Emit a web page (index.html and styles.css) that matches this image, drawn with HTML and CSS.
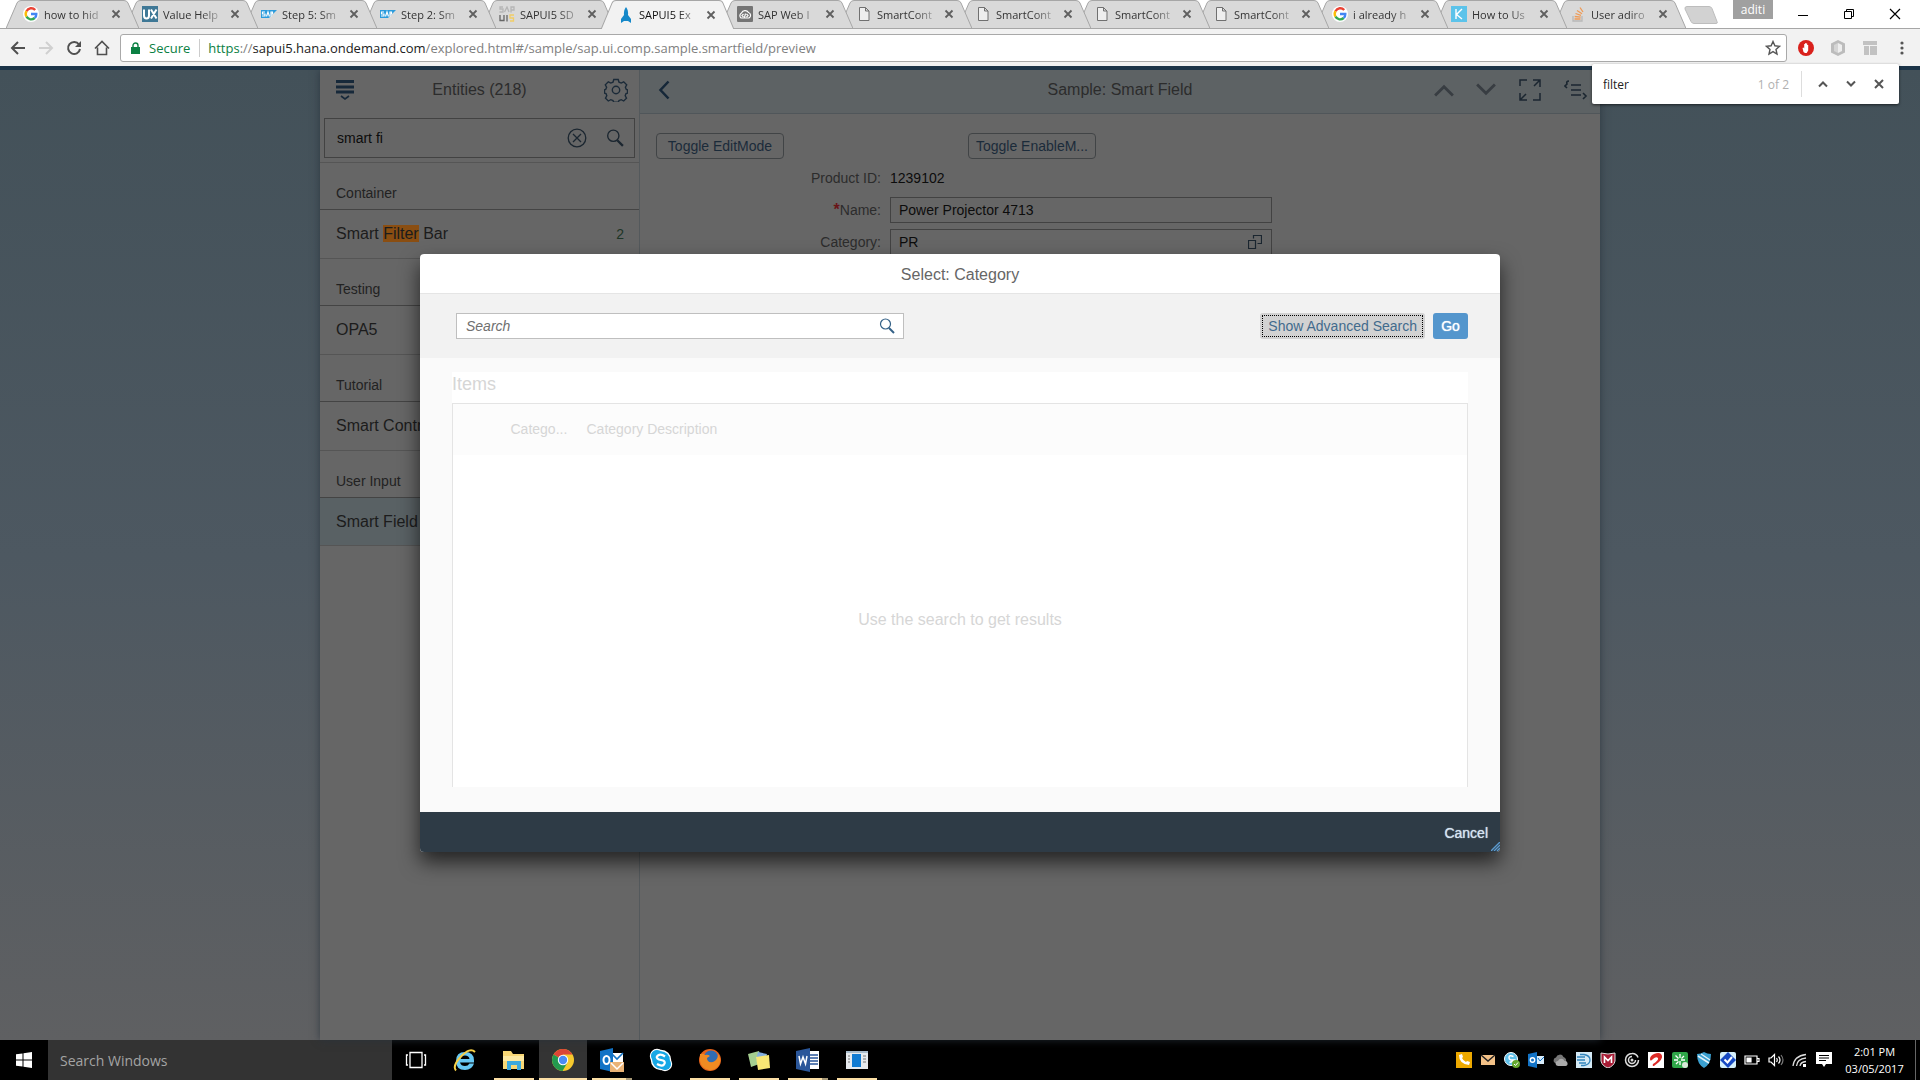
FILE: index.html
```html
<!DOCTYPE html>
<html lang="en">
<head>
<meta charset="utf-8">
<title>SAPUI5 Explored</title>
<link rel="stylesheet" href="styles.css">
</head>
<body>
<svg class="defs" aria-hidden="true">
  <symbol id="shape" viewBox="0 0 133 28" preserveAspectRatio="none"><path d="M0 28.500L11 3Q12 .5 15 .5H118Q121 .5 122 3L133 28.500"/></symbol>
  <symbol id="x" viewBox="0 0 10 10"><path d="M1.500 1.500l7 7M8.500 1.500l-7 7" fill="none" stroke="#5f5f5f" stroke-width="1.800"/></symbol>
  <symbol id="google" viewBox="0 0 16 16"><circle cx="8" cy="8" r="8" fill="#fff"/><g fill="none" stroke-width="2.400"><path d="M12.200 4A5.300 5.300 0 0 0 3.500 5.200" stroke="#ea4335"/><path d="M3.500 5.200a5.300 5.300 0 0 0 0 5.500" stroke="#fbbc05"/><path d="M3.500 10.700a5.300 5.300 0 0 0 8.200 1.300" stroke="#34a853"/><path d="M11.700 12A5.200 5.200 0 0 0 13.300 8H8" stroke="#4285f4"/></g></symbol>
  <symbol id="ux" viewBox="0 0 16 16"><path d="M0 0h16v16H0z" fill="#3f7896"/><path d="M2 3.500v6q0 3 2.500 3t2.500-3v-6M9 3.500l5.500 9M14.500 3.500l-5.500 9" fill="none" stroke="#fff" stroke-width="2"/></symbol>
  <symbol id="sap" viewBox="0 0 16 16"><path d="M0 4h16l-8 8H0z" fill="#2a9bdc"/><path d="M4 6H1.500v2H4v2H1M5.500 10.500L7 6l1.500 4.500M10 10.500V6h1.500v2H10" fill="none" stroke="#fff" stroke-width="1.200"/></symbol>
  <symbol id="sapui" viewBox="0 0 16 16"><g fill="none" stroke-width="1.300"><path d="M4 1H1v2h3v3H.5M5.500 6L8 1l2 5M12 6.500V1h3v3h-3" stroke="#b5b5b5"/><path d="M1 9v5.500h4V9M8 9v6.500" stroke="#666"/><path d="M15 9h-4v3h3.500v3H11" stroke="#f1cd66"/></g></symbol>
  <symbol id="rocket" viewBox="0 0 16 16"><path d="M8 0q2.500 3 2 8l3 4v4l-3-2H6l-3 2v-4l3-4Q5.500 3 8 0z" fill="#1588c9"/></symbol>
  <symbol id="webide" viewBox="0 0 16 16"><rect width="16" height="16" rx="1" fill="#747474"/><path d="M4 12a3 3 0 0 1 .5-5 4 4 0 0 1 7-.5A3 3 0 0 1 12 12zM6.500 8L5 9.500 6.500 11M9.500 8L11 9.500 9.500 11M8.500 7.500l-1 4" fill="none" stroke="#fff" stroke-width="1.200"/></symbol>
  <symbol id="doc" viewBox="0 0 16 16"><path d="M3.500 1.500h6l3.500 3.500v9.500H3.500zM9.500 1.500V5H13" fill="#eee" stroke="#707070"/></symbol>
  <symbol id="kk" viewBox="0 0 16 16"><path d="M0 0h16v16H0z" fill="#5cc3ea"/><path d="M5 3v10M11 3L5.500 8.500 11 13" fill="none" stroke="#fff" stroke-width="1.400"/></symbol>
  <symbol id="so" viewBox="0 0 16 16"><path d="M3 10v5h9v-5" fill="none" stroke="#b8b8b8" stroke-width="1.300"/><path d="M4.500 13h6M4.700 10.500l6 .7M5.500 7.500l5.500 1.800M7 4.500l5 3.200M10 1.500l3 4.500" stroke="#ef9a55" stroke-width="1.300"/></symbol>
  <symbol id="glass" viewBox="0 0 16 16"><circle cx="6.500" cy="6" r="5" fill="none" stroke="currentColor" stroke-width="1.200"/><path d="M10 10l5 5" stroke="currentColor" stroke-width="2"/></symbol>
  <symbol id="up" viewBox="0 0 18 12"><path d="M1 11l8-8 8 8" fill="none" stroke="currentColor" stroke-width="2.500"/></symbol>
</svg>

<header class="browser">
  <div class="tabstrip">
    <ul class="tabs">
      <li style="z-index:14"><svg class="shape"><use href="#shape"/></svg><svg class="fav"><use href="#google"/></svg><span>how to hid</span><button aria-label="Close tab"><svg><use href="#x"/></svg></button></li>
      <li style="z-index:13"><svg class="shape"><use href="#shape"/></svg><svg class="fav"><use href="#ux"/></svg><span>Value Help</span><button aria-label="Close tab"><svg><use href="#x"/></svg></button></li>
      <li style="z-index:12"><svg class="shape"><use href="#shape"/></svg><svg class="fav"><use href="#sap"/></svg><span>Step 5: Sm</span><button aria-label="Close tab"><svg><use href="#x"/></svg></button></li>
      <li style="z-index:11"><svg class="shape"><use href="#shape"/></svg><svg class="fav"><use href="#sap"/></svg><span>Step 2: Sm</span><button aria-label="Close tab"><svg><use href="#x"/></svg></button></li>
      <li style="z-index:10"><svg class="shape"><use href="#shape"/></svg><svg class="fav"><use href="#sapui"/></svg><span>SAPUI5 SD</span><button aria-label="Close tab"><svg><use href="#x"/></svg></button></li>
      <li class="active" style="z-index:15"><svg class="shape"><use href="#shape"/></svg><svg class="fav"><use href="#rocket"/></svg><span>SAPUI5 Ex</span><button aria-label="Close tab"><svg><use href="#x"/></svg></button></li>
      <li style="z-index:9"><svg class="shape"><use href="#shape"/></svg><svg class="fav"><use href="#webide"/></svg><span>SAP Web I</span><button aria-label="Close tab"><svg><use href="#x"/></svg></button></li>
      <li style="z-index:8"><svg class="shape"><use href="#shape"/></svg><svg class="fav"><use href="#doc"/></svg><span>SmartCont</span><button aria-label="Close tab"><svg><use href="#x"/></svg></button></li>
      <li style="z-index:7"><svg class="shape"><use href="#shape"/></svg><svg class="fav"><use href="#doc"/></svg><span>SmartCont</span><button aria-label="Close tab"><svg><use href="#x"/></svg></button></li>
      <li style="z-index:6"><svg class="shape"><use href="#shape"/></svg><svg class="fav"><use href="#doc"/></svg><span>SmartCont</span><button aria-label="Close tab"><svg><use href="#x"/></svg></button></li>
      <li style="z-index:5"><svg class="shape"><use href="#shape"/></svg><svg class="fav"><use href="#doc"/></svg><span>SmartCont</span><button aria-label="Close tab"><svg><use href="#x"/></svg></button></li>
      <li style="z-index:4"><svg class="shape"><use href="#shape"/></svg><svg class="fav"><use href="#google"/></svg><span>i already h</span><button aria-label="Close tab"><svg><use href="#x"/></svg></button></li>
      <li style="z-index:3"><svg class="shape"><use href="#shape"/></svg><svg class="fav"><use href="#kk"/></svg><span>How to Us</span><button aria-label="Close tab"><svg><use href="#x"/></svg></button></li>
      <li style="z-index:2"><svg class="shape"><use href="#shape"/></svg><svg class="fav"><use href="#so"/></svg><span>User adiro</span><button aria-label="Close tab"><svg><use href="#x"/></svg></button></li>
    </ul>
    <button class="newtab" aria-label="New tab"><svg width="34" height="18"><path d="M3 .5h22q2 0 3 2l5 13q1 2-1 2H10q-2 0-3-2L1 3Q.5 .5 3 .5z" fill="#d2d2d2" stroke="#bdbdbd"/></svg></button>
    <div class="window">
      <button class="user">aditi</button>
      <button class="ctl" aria-label="Minimize"><svg width="12" height="12"><path d="M1 7.500h10" stroke="#000"/></svg></button>
      <button class="ctl" aria-label="Restore"><svg width="12" height="12" fill="none" stroke="#000"><path d="M1.500 3.500h7v7h-7zM3.500 3V1.500h7v7H9"/></svg></button>
      <button class="ctl" aria-label="Close"><svg width="12" height="12" fill="none" stroke="#000"><path d="M1 1l10 10M11 1L1 11" stroke-width="1.200"/></svg></button>
    </div>
  </div>
  <div class="toolbar">
    <button class="nav" aria-label="Back"><svg width="16" height="16"><path d="M15 8H2M8 2L2 8l6 6" fill="none" stroke="#505050" stroke-width="2"/></svg></button>
    <button class="nav" aria-label="Forward"><svg width="16" height="16"><path d="M1 8h13M8 2l6 6-6 6" fill="none" stroke="#d0d0d0" stroke-width="2"/></svg></button>
    <button class="nav" aria-label="Reload"><svg width="16" height="16"><path d="M13 4.500A6 6 0 1 0 14 9" fill="none" stroke="#505050" stroke-width="2"/><path d="M15 1v6H9z" fill="#505050"/></svg></button>
    <button class="nav" aria-label="Home"><svg width="16" height="16"><path d="M1 8.500L8 1.500l7 7M3.500 7.500V14.500h9V7.500" fill="none" stroke="#505050" stroke-width="1.600"/></svg></button>
    <div class="omnibox">
      <svg width="9" height="12"><path d="M0 5h9v7H0z" fill="#0b8043"/><path d="M2 5V3.500a2.500 2.500 0 0 1 5 0V5" fill="none" stroke="#0b8043" stroke-width="1.400"/></svg>
      <span class="secure">Secure</span>
      <span class="url"><b>https</b>://<i>sapui5.hana.ondemand.com</i>/explored.html#/sample/sap.ui.comp.sample.smartfield/preview</span>
      <button aria-label="Bookmark"><svg width="16" height="16"><path d="M8 1.500l1.900 4.300 4.600.5-3.500 3.100 1 4.600L8 11.600 4 14l1-4.600L1.500 6.300l4.600-.5z" fill="none" stroke="#555" stroke-width="1.400"/></svg></button>
    </div>
    <div class="ext">
      <svg width="16" height="16"><ellipse cx="8" cy="8" rx="8" ry="8" fill="#d9211c"/><path d="M5.500 12L4.500 8l1-.5.700 1V4h1v3.500V3h1v4.500V3.500h1V8V5h1v5.500l-1.500 2.500H7z" fill="#fff"/></svg>
      <svg width="16" height="16"><path d="M8 0l7 3.500v9L8 16l-7-3.500v-9z" fill="#bcbcbc"/><path d="M8 3l4 2v6l-4 2z" fill="#eee"/><path d="M8 3L4 5v6l4 2z" fill="#d5d5d5"/></svg>
      <svg width="16" height="16"><path d="M1 1h14v4H1zM2 6h5v9H2zM8 6h7v9H8z" fill="#c2c2c2"/></svg>
      <button aria-label="Menu"><svg width="16" height="16" fill="#555"><circle cx="8" cy="3" r="1.600"/><circle cx="8" cy="8" r="1.600"/><circle cx="8" cy="13" r="1.600"/></svg></button>
    </div>
  </div>
  <form class="find">
    <input aria-label="Find in page" value="filter"><span>1 of 2</span>
    <div class="findnav">
      <button type="button" aria-label="Previous"><svg width="10" height="8"><path d="M1 6.500l4-4 4 4" fill="none" stroke="#555" stroke-width="2"/></svg></button>
      <button type="button" aria-label="Next"><svg width="10" height="8"><path d="M1 1.500l4 4 4-4" fill="none" stroke="#555" stroke-width="2"/></svg></button>
      <button type="button" aria-label="Close"><svg width="10" height="10"><path d="M1 1l8 8M9 1L1 9" stroke="#555" stroke-width="2"/></svg></button>
    </div>
  </form>
</header>

<main class="app">
  <div class="shell">
    <aside class="master">
      <div class="mhead">
        <button aria-label="Menu"><svg width="20" height="22"><path d="M1 2.500h18M1 8h18M1 13h18" stroke="#17293a" stroke-width="3"/><path d="M6 17l4 3 4-3" fill="none" stroke="#17293a" stroke-width="1.600"/></svg></button>
        <h2>Entities (218)</h2>
        <button aria-label="Settings"><svg width="24" height="24" viewBox="-12 -12 24 24" fill="none" stroke="#1b2a38" stroke-width="1.400"><path d="M-2.200-10.500h4.400l.8 2.700 2.200.9 2.500-1.300 3 3-1.300 2.500.9 2.200 1.200.4v3.200l-1.500.5-.8 2.100 1.300 2.500-2.800 2.800-2.500-1.300-2.200.9-.8 1.700h-4.400l-.8-1.700-2.200-.9-2.500 1.300-2.800-2.800 1.300-2.500-.8-2.100-1.500-.5v-3.200l1.200-.4.9-2.200-1.300-2.500 3-3 2.500 1.300 2.200-.9z"/><circle r="3.700"/></svg></button>
      </div>
      <div class="msearch">
        <input aria-label="Search entities" value="smart fi">
        <button aria-label="Clear"><svg width="20" height="20" fill="none" stroke="#1b2630" stroke-width="1.300"><circle cx="10" cy="10" r="8.800"/><path d="M6 6l8 8M14 6l-8 8"/></svg></button>
        <button aria-label="Search"><svg width="18" height="18"><use href="#glass"/></svg></button>
      </div>
      <h3>Container</h3>
      <a class="item" href="#"><span>Smart <mark>Filter</mark> Bar</span><em>2</em></a>
      <h3>Testing</h3>
      <a class="item" href="#"><span>OPA5</span></a>
      <h3>Tutorial</h3>
      <a class="item" href="#"><span>Smart Controls</span></a>
      <h3>User Input</h3>
      <a class="item selected" href="#"><span>Smart Field</span></a>
    </aside>
    <section class="detail">
      <div class="dhead">
        <button aria-label="Back"><svg width="12" height="20"><path d="M10.500 1.500L2.500 10l8 8.500" fill="none" stroke="#152738" stroke-width="2.500"/></svg></button>
        <h2>Sample: Smart Field</h2>
        <div class="dtools">
          <button aria-label="Previous sample"><svg class="chev" width="20" height="14"><use href="#up"/></svg></button>
          <button aria-label="Next sample"><svg class="chev down" width="20" height="14"><use href="#up"/></svg></button>
          <button aria-label="Full screen"><svg width="24" height="24" fill="none" stroke="#1b2630" stroke-width="1.500"><path d="M9 2H2v6M22 15v7h-7M15 2h7v7M22 2l-6 6M2 15v7h7M2 22l6-6"/></svg></button>
          <button aria-label="Show code"><svg width="24" height="22" fill="none" stroke="#1b2630" stroke-width="1.600"><path d="M5 2Q2 2 3 5l-2 2 2 2M7 6h10M7 11h10M7 16h10M19 14l3 3-3 3"/></svg></button>
        </div>
      </div>
      <div class="toggles">
        <button>Toggle EditMode</button>
        <button>Toggle EnableM...</button>
      </div>
      <div class="fields">
        <span class="label">Product ID:</span><output>1239102</output>
        <label for="name"><b>*</b>Name:</label><div class="field"><input id="name" value="Power Projector 4713"></div>
        <label for="cat">Category:</label><div class="field"><input id="cat" value="PR"><svg width="14" height="14" fill="none" stroke="#1b2630"><path d="M.5 5.500h7v8h-7zM5.500 3.500v-3h8v8h-4" stroke-width="1.200"/></svg></div>
      </div>
    </section>
  </div>
  <div class="layer">
    <div class="dialog" role="dialog" aria-labelledby="dlg">
      <h2 id="dlg">Select: Category</h2>
      <div class="bar">
        <div class="search"><input placeholder="Search" aria-label="Search"><svg width="16" height="16"><use href="#glass"/></svg></div>
        <button class="adv">Show Advanced Search</button>
        <button class="go">Go</button>
      </div>
      <div class="body">
        <h3>Items</h3>
        <table>
          <thead><tr><th class="sel"></th><th class="cat">Catego...</th><th>Category Description</th></tr></thead>
          <tbody><tr><td colspan="3">Use the search to get results</td></tr></tbody>
        </table>
      </div>
      <footer><button>Cancel</button><svg class="grip" width="9" height="9"><path d="M0 9L9 0M3 9l6-6M6 9l3-3" stroke="#5b9bd0" stroke-width="1.400"/></svg></footer>
    </div>
  </div>
</main>

<footer class="taskbar">
  <button class="start" aria-label="Start"><svg width="16" height="16" fill="#fff"><path d="M0 2.300l6.500-.9v6.100H0zM7.500 1.200L16 0v7.500H7.500zM0 8.500h6.500v6.100L0 13.700zM7.500 8.500H16V16l-8.500-1.200z"/></svg></button>
  <input aria-label="Search Windows" placeholder="Search Windows">
  <div class="apps">
    <button aria-label="Task view"><svg viewBox="0 0 24 24" fill="none" stroke="#fff" stroke-width="1.300"><path d="M6 4.500h12v15H6zM4 7H2.500v10H4M20 7h1.500v10H20"/></svg></button>
    <button aria-label="Internet Explorer"><svg viewBox="0 0 24 24"><path d="M7 14.500q1 3.500 5 3.500 3 0 4.500-2.500h4.500Q19 22 12 22 3 22 3 13T12 4t9 8.500v2zM7.500 11h9Q16 7.500 12 7.500T7.500 11z" fill="#67c8f3" fill-rule="evenodd"/><path d="M3 22.500Q-1 18 8 8.500T22 4" fill="none" stroke="#f6cf45" stroke-width="2"/></svg></button>
    <button class="open" aria-label="File Explorer"><svg viewBox="0 0 24 24"><path d="M1 3h8l2 3h11v15H1z" fill="#f8d775"/><path d="M1 8h21v5H1z" fill="#fde9a2"/><path d="M5 13h14v9h-4v-5H9v5H5z" fill="#3ca9de"/></svg></button>
    <button class="open current" aria-label="Chrome"><svg viewBox="0 0 24 24"><circle cx="12" cy="12" r="11" fill="#f6c92e"/><path d="M12 12L2.500 6.500A11 11 0 0 1 21.500 6.500H12z" fill="#dc4537"/><path d="M12 12L2.500 6.500A11 11 0 0 0 11.500 23L16.500 14.500z" fill="#23994f"/><circle cx="12" cy="12" r="5.200" fill="#fff"/><circle cx="12" cy="12" r="4.200" fill="#4b8bf4"/></svg></button>
    <button class="open multi" aria-label="Outlook"><svg viewBox="0 0 24 24"><path d="M12 5h11v13H12z" fill="#fff"/><path d="M12 6l5 5 6-6M12 18h11" fill="none" stroke="#1273c6" stroke-width="1.600"/><path d="M0 3l13-3v24L0 21z" fill="#1273c6"/><ellipse cx="6.500" cy="12" rx="3" ry="4" fill="none" stroke="#fff" stroke-width="2"/><path d="M10 14h14v10H10z" fill="#eab376"/><path d="M11 15l6 6 6-6" fill="none" stroke="#fff" stroke-width="1.500"/></svg></button>
    <button aria-label="Skype"><svg viewBox="0 0 24 24"><g fill="#17a8e6" stroke="#fff" stroke-width="1.400"><circle cx="8" cy="8" r="6.500"/><circle cx="16" cy="16" r="6.500"/><circle cx="12" cy="12" r="9.500"/></g><g fill="#17a8e6"><circle cx="8" cy="8" r="6"/><circle cx="16" cy="16" r="6"/></g><path d="M16 8.500Q12 5.500 9 7.500t1 4l4 1q3 1.500 1 4t-7-.5" fill="none" stroke="#fff" stroke-width="2.200"/></svg></button>
    <button class="open" aria-label="Firefox"><svg viewBox="0 0 24 24"><circle cx="12" cy="12" r="11" fill="#e8641b"/><circle cx="13" cy="9.500" r="7" fill="#2f6cb3"/><path d="M2 6q3-1 5 1 3-1 5 1l-3 2q0 5 6 4 5-2 5-8 4 6 1 11-4 6-10 5Q3 20 2 13z" fill="#f18b22"/></svg></button>
    <button class="open" aria-label="Sticky Notes"><svg viewBox="0 0 24 24"><path d="M1 6l11-3 3 12-11 4z" fill="#a5cf90"/><path d="M11 4l9 2-2 7-9-1z" fill="#83aede"/><path d="M9 9l13-2 1 13-12 2z" fill="#f8e774"/></svg></button>
    <button class="open multi" aria-label="Word"><svg viewBox="0 0 24 24"><path d="M12 3h11v18H12z" fill="#fff"/><path d="M14 7h8M14 10h8M14 13h8M14 16h8" stroke="#2b579a" stroke-width="1.400"/><path d="M0 3l14-3v24L0 21z" fill="#2b579a"/><path d="M3 8l1.500 8L7 9l2.500 7L11 8" fill="none" stroke="#fff" stroke-width="1.500"/></svg></button>
    <button class="open" aria-label="Application"><svg viewBox="0 0 24 24"><path d="M1 3h22v18H1z" fill="#e6eaee"/><path d="M1 3h22v2H1z" fill="#a9bccc"/><path d="M7 6h9v13H7z" fill="#117bd2"/><path d="M3 8h2M3 11h2M3 14h2M18 8h3M18 11h3M18 14h3" stroke="#777"/></svg></button>
  </div>
  <div class="tray">
    <svg viewBox="0 0 16 16"><path d="M0 0h16v16H0z" fill="#eda900"/><path d="M3 3q0 9 10 10l1-3-3-1-1 1Q7 8.500 6 6l1-1-1-3z" fill="#fff"/></svg>
    <svg viewBox="0 0 16 16"><path d="M1 3h14v10H1z" fill="#f3c187"/><path d="M1 3l7 6 7-6" fill="none" stroke="#222" stroke-width="1.400"/></svg>
    <svg viewBox="0 0 16 16"><circle cx="7" cy="7" r="6.500" fill="#5fc0ea" stroke="#fff"/><path d="M9.500 4.500Q5 2.500 5 5.500t4.500 2.500-4 2.500" fill="none" stroke="#fff" stroke-width="1.500"/><circle cx="12" cy="12" r="4" fill="#64a82e"/><path d="M10 12l1.500 1.500 2.500-3" fill="none" stroke="#fff"/></svg>
    <svg viewBox="0 0 16 16"><path d="M0 2l9-2v16l-9-2z" fill="#1273c6"/><path d="M9 4h7v8H9z" fill="#d8ecfb"/><path d="M10 6l2 3 4-4" fill="none" stroke="#1273c6"/><circle cx="4.500" cy="8" r="2.200" fill="none" stroke="#fff" stroke-width="1.400"/></svg>
    <svg viewBox="0 0 16 16"><path d="M3 11a3 3 0 0 1 1-5.500 4 4 0 0 1 7.500-.5A3.500 3.500 0 0 1 13 11z" fill="#777"/><path d="M6 14a2.500 2.500 0 0 1 0-5 3.500 3.500 0 0 1 6.500 0 2.500 2.500 0 0 1 1 5z" fill="#aaa"/></svg>
    <svg viewBox="0 0 16 16"><path d="M0 0h16v16H0z" fill="#d5eaf6"/><path d="M1 5h8M1 8h8M3 11h7M4 2.500h4q6 1 6 5.500t-6 5.500H5" fill="none" stroke="#3285bd" stroke-width="1.300"/></svg>
    <svg viewBox="0 0 16 16"><path d="M1 1l7 1 7-1v8q-1 5-7 7-6-2-7-7z" fill="#a81c35" stroke="#ddd"/><path d="M4.500 11V5L8 8.500 11.500 5v6" fill="none" stroke="#fff" stroke-width="1.600"/></svg>
    <svg viewBox="0 0 16 16"><g fill="none" stroke="#ddd" stroke-width="1.500"><path d="M8 1.500A6.500 6.500 0 1 0 14.500 8M8 4.500A3.500 3.500 0 1 0 11.500 8M8 1.500a6 6 0 0 1 6 4"/></g><circle cx="8" cy="8" r="1.500" fill="#ddd"/></svg>
    <svg viewBox="0 0 16 16"><path d="M0 0h16v16H0z" fill="#fff"/><path d="M2 7q0-3 4-5 5-2 7 0 3 3-2 8l-5 4q-2 0-1-2 6-4 5-6-2-2-5 1-3 3-3 0z" fill="#dc2a27"/></svg>
    <svg viewBox="0 0 16 16"><rect width="16" height="16" rx="2" fill="#2fa548"/><path d="M8 2v4M8 9v4M2 8h4M9 8h4M3.500 3.500l3 3M12 4L9.500 6.500M4 12l2.500-2.500" stroke="#fff" stroke-width="1.300"/><circle cx="13" cy="13" r="3" fill="#d8e7d8"/></svg>
    <svg viewBox="0 0 16 16"><path d="M1 2q4 0 7-2 3 2 7 2 0 10-7 14Q1 12 1 2z" fill="#3ba0d0"/><path d="M2 4l11 7M5 2l9 6" stroke="#e3f3fb" stroke-width="1.500"/></svg>
    <svg viewBox="0 0 16 16"><rect width="16" height="16" rx="2" fill="#d5f0fb"/><path d="M8 0l8 8-8 8-8-8z" fill="#1649c2"/><path d="M4.500 7.500l3 3L12 5" fill="none" stroke="#fff" stroke-width="2"/></svg>
    <svg viewBox="0 0 16 16" fill="none" stroke="#fff" stroke-width="1.200"><path d="M1 4h12v8H1zM13 6.500h2v3h-2"/><path d="M3 6h4v4H3z" fill="#fff"/></svg>
    <svg viewBox="0 0 16 16" fill="none" stroke="#fff" stroke-width="1.200"><path d="M1 6h2l3.500-3.500v11L3 10H1zM8.500 6q1.500 2 0 4M10.500 4.500q3 3.500 0 7"/><path d="M13 3q4 5 0 10" stroke="#777"/></svg>
    <svg viewBox="0 0 16 16" fill="none" stroke="#ddd" stroke-width="1.300"><path d="M1 14Q2 4 14 2.500M4.500 14Q5 7 14 6M8 14q.5-4 6-4.500"/><path d="M11 12h3v3h-3z" fill="#fff" stroke="none"/></svg>
    <svg viewBox="0 0 16 16"><path d="M0 0h16v12h-6l-2 3-2-3H0z" fill="#fff"/><path d="M3 3.500h10M3 6h10M3 8.500h7" stroke="#000"/></svg>
  </div>
  <div class="clock"><span>2:01 PM</span><span>03/05/2017</span></div>
</footer>
</body>
</html>
```
FILE: styles.css
```css
* { box-sizing: border-box; }
body { margin: 0; height: 100vh; display: flex; flex-direction: column; overflow: hidden; font-family: "Liberation Sans", Arial, sans-serif; font-size: 14px; }
button { border: 0; background: none; padding: 0; font: inherit; color: inherit; display: flex; align-items: center; justify-content: center; }
input { font: inherit; color: inherit; border: 0; background: none; padding: 0; min-width: 0; outline: 0; }
h2, h3, ul { margin: 0; padding: 0; font-weight: normal; }
svg { flex: none; display: block; }
.defs { position: absolute; width: 0; height: 0; }

/* browser chrome */
.browser { position: relative; z-index: 5; flex: none; background: #f2f2f2; font-family: "Open Sans", "Noto Sans", sans-serif; border-bottom: 4px solid #1c3448; }
.tabstrip { display: flex; height: 29px; background: #fff; border-bottom: 1px solid #a6a6a6; }
.tabs { display: flex; list-style: none; padding-left: 6px; }
.tabs li { position: relative; width: 119px; height: 28px; display: flex; align-items: center; padding: 0 0 0 17px; font-size: 11px; color: #333; }
.tabs .shape { position: absolute; left: 0; top: 0; width: 133px; height: 28px; fill: #d9d9d9; stroke: #a6a6a6; }
.tabs .active { height: 29px; color: #111; }
.tabs .active .shape { fill: #f2f2f2; height: 29px; }
.tabs .fav { position: relative; width: 16px; height: 16px; margin-right: 5px; }
.tabs span { position: relative; flex: 1; white-space: nowrap; -webkit-mask-image: linear-gradient(90deg, #000 60%, transparent); mask-image: linear-gradient(90deg, #000 60%, transparent); }
.tabs button { position: relative; width: 18px; height: 20px; }
.tabs button svg { width: 10px; height: 10px; }
.newtab { margin: 6px 0 0 12px; height: 18px; }
.window { margin-left: auto; display: flex; align-items: flex-start; padding-right: 2px; }
.user { width: 40px; height: 19px; margin-right: 7px; background: #a0a0a0; color: #fff; font-size: 12px; }
.ctl { width: 46px; height: 27px; }
.toolbar { display: flex; align-items: center; height: 37px; padding: 0 10px 0 4px; }
.nav { width: 28px; height: 28px; }
.omnibox { flex: 1; display: flex; align-items: center; height: 28px; margin-left: 4px; padding: 0 5px 0 10px; background: #fff; border: 1px solid #a9a9a9; border-radius: 3px; font-size: 13px; white-space: nowrap; }
.secure { color: #0b8043; margin-left: 9px; padding-right: 9px; border-right: 1px solid #ccc; }
.url { flex: 1; padding-left: 8px; color: #808080; }
.url b { font-weight: normal; color: #0b8043; }
.url i { font-style: normal; color: #222; }
.ext { display: flex; gap: 16px; margin-left: 11px; }
.find { position: absolute; right: 21px; top: 64px; width: 307px; height: 40px; display: flex; align-items: center; padding: 0 6px 0 11px; background: #fff; border-radius: 2px; box-shadow: 0 1px 3px rgba(0,0,0,.6); font-size: 12px; }
.find input { flex: 1; color: #222; }
.find span { color: #b0b0b0; padding-right: 12px; }
.findnav { display: flex; height: 26px; border-left: 1px solid #ddd; padding-left: 7px; }
.findnav button { width: 28px; }

/* application */
.app { position: relative; flex: 1; min-height: 0; display: flex; justify-content: center; background: linear-gradient(#435159, #4d5861 50%, #5f6062); }
.shell { display: flex; width: 66.666%; background: #666; box-shadow: 0 0 8px rgba(40,50,60,.8); }
.master { width: 25%; min-width: 320px; border-right: 1px solid #54595c; color: #222; }
.mhead { display: flex; align-items: center; justify-content: space-between; height: 46px; padding: 0 11px 6px 15px; }
.mhead h2, .dhead h2, .dialog h2 { font-size: 16px; line-height: 20px; }
.mhead h2, .dhead h2 { color: #2c2c2c; }
.msearch { display: flex; align-items: center; height: 40px; margin: 2px 4px 4px; padding: 0 10px 0 12px; border: 1px solid #424242; color: #1b2630; }
.msearch input { flex: 1; color: #0c0c0c; }
.msearch button { margin-left: 19px; }
.master h3 { height: 48px; padding: 20px 16px 0; font-size: 14px; line-height: 20px; border-top: 1px solid #555; border-bottom: 1px solid #444; }
.item { display: flex; align-items: center; justify-content: space-between; height: 48px; padding: 0 15px 0 16px; font-size: 16px; color: #1c1c1c; text-decoration: none; }
.item em { font-style: normal; font-size: 14px; color: #1d3526; }
.item mark { background: #8a4e12; color: #1c1c1c; }
.selected { background: #596164; border-bottom: 1px solid #555; }
.detail { flex: 1; }
.dhead { display: grid; grid-template-columns: 1fr auto 1fr; align-items: center; height: 44px; padding: 0 12px 4px 18px; background: #5d6264; border-bottom: 1px solid #50565a; }
.dhead > button { justify-self: start; }
.dhead h2 { padding-right: 6px; }
.dtools { display: flex; justify-content: flex-end; align-items: center; gap: 22px; }
.chev { color: #383d42; }
.down { transform: rotate(180deg); }
.toggles { display: grid; grid-template-columns: repeat(3, 1fr); padding: 19px 8px 3px 16px; }
.toggles button { width: 128px; height: 26px; border: 1px solid #414446; border-radius: 4px; color: #1b2b3a; }
.fields { display: grid; grid-template-columns: 241px 382px; column-gap: 9px; grid-auto-rows: 32px; align-items: center; color: #0c0c0c; }
.fields label, .label { text-align: right; color: #2c2c2c; }
.fields label b { color: #6a1418; font-size: 16px; }
.field { display: flex; align-items: center; height: 26px; padding: 0 9px 0 8px; border: 1px solid #424242; }
.field input { flex: 1; }

/* value help dialog */
.layer { position: absolute; inset: 0; display: flex; align-items: center; justify-content: center; padding-bottom: 4px; }
.dialog { width: 56.25%; border-radius: 4px; background: #fff; overflow: hidden; box-shadow: 0 10px 20px rgba(0,0,0,.65); }
.dialog h2 { height: 40px; padding-top: 1px; line-height: 40px; text-align: center; color: #666; border-bottom: 1px solid #e5e5e5; }
.bar { display: flex; align-items: center; height: 64px; padding: 0 32px 0 36px; background: #f2f2f2; }
.search { width: 448px; height: 26px; display: flex; align-items: center; padding: 0 8px 0 9px; background: #fff; border: 1px solid #bfbfbf; color: #346187; }
.search input { flex: 1; }
.search input::placeholder { color: #6f6f6f; font-style: italic; opacity: 1; }
.bar button { height: 26px; border-radius: 3px; }
.adv { margin-left: auto; padding: 0 8px; background: #d2d2d2; color: #426b8d; outline: 1px dotted #000; outline-offset: -3px; }
.go { width: 35px; margin-left: 8px; background: #5496cd; color: #fff; text-shadow: 0 0 1px #fff; }
.body { padding: 14px 32px 25px; background: #fafafa; }
.body h3 { height: 31px; padding-top: 2px; font-size: 18px; line-height: 20px; color: #d6d6d6; background: #fff; }
table { width: 100%; table-layout: fixed; border-collapse: collapse; border: 1px solid #e4e4e4; border-bottom: 0; background: #fff; }
th { height: 52px; padding: 0 8px 2px; font-size: 14px; font-weight: normal; text-align: left; color: #d6d6d6; background: #fcfcfc; white-space: nowrap; }
.sel { width: 50px; }
.cat { width: 76px; }
td { height: 332px; padding: 0 0 2px; text-align: center; font-size: 16px; color: #d6d6d6; }
.dialog footer { position: relative; display: flex; justify-content: flex-end; height: 40px; padding: 2px 12px 0; background: #2e3b46; color: #d6e4f2; }
.dialog footer button { text-shadow: 0 0 1px #d6e4f2; }
.grip { position: absolute; right: 0; bottom: 1px; }

/* taskbar */
.taskbar { flex: none; display: flex; height: 40px; background: #000; color: #fff; font-family: "Open Sans", "Noto Sans", sans-serif; }
.start { width: 48px; }
.taskbar input { width: 344px; padding: 0 12px; background: #333; font-size: 14px; }
.taskbar input::placeholder { color: #a4a4a4; opacity: 1; }
.apps { display: flex; gap: 1px; }
.apps button { width: 48px; height: 40px; }
.apps svg { width: 24px; height: 24px; }
.open { background: linear-gradient(#fbdfa5, #fbdfa5) center bottom / 40px 2px no-repeat; }
.current { background: linear-gradient(#fbdfa5, #fbdfa5) center bottom / 48px 2px no-repeat #343434; }
.multi { background: linear-gradient(90deg, #fbdfa5 34px, #a99a78 34px) center bottom / 40px 2px no-repeat; }
.tray { margin-left: auto; display: flex; align-items: center; gap: 8px; }
.tray svg { width: 16px; height: 16px; }
.clock { display: flex; flex-direction: column; align-items: center; justify-content: center; width: 82px; margin: 0 4px 0 2px; border-right: 1px solid #666; font-size: 11px; line-height: 17px; }
```
